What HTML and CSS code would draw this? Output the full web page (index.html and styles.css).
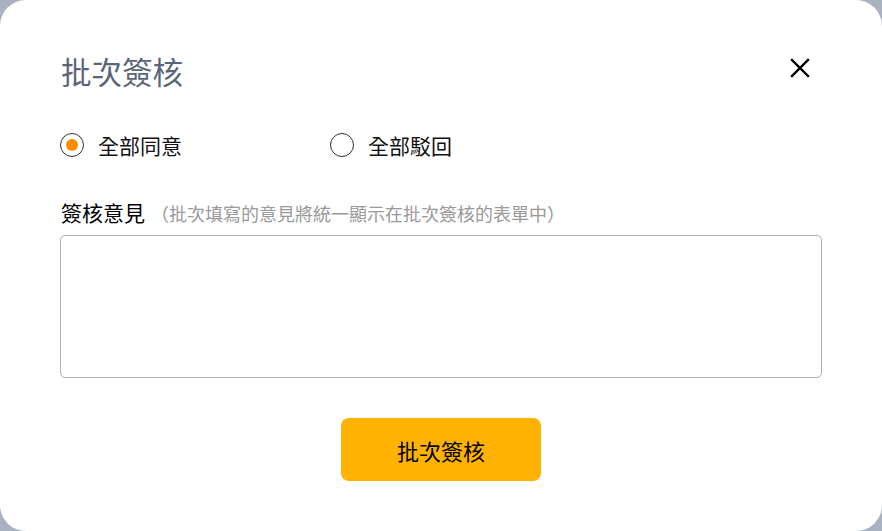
FILE: index.html
```html
<!DOCTYPE html>
<html lang="zh-Hant">
<head>
<meta charset="utf-8">
<title>批次簽核</title>
<link rel="stylesheet" href="styles.css">
</head>
<body>
<div class="dialog">
  <div class="header">
    <h1 class="title">批次簽核</h1>
    <button class="close" aria-label="關閉">
      <svg width="20" height="20" viewBox="0 0 20 20"><path d="M2 2 L18 18 M18 2 L2 18" stroke="#000" stroke-width="2.4" stroke-linecap="square" fill="none"/></svg>
    </button>
  </div>
  <div class="radios">
    <label class="radio"><span class="dot checked"></span><span class="rlabel">全部同意</span></label>
    <label class="radio"><span class="dot"></span><span class="rlabel">全部駁回</span></label>
  </div>
  <div class="field-label"><span class="main">簽核意見</span><span class="hint">（批次填寫的意見將統一顯示在批次簽核的表單中）</span></div>
  <div class="textarea"></div>
  <div class="actions"><button class="submit">批次簽核</button></div>
</div>
</body>
</html>
```

FILE: styles.css
```css
html, body {
  margin: 0;
  padding: 0;
  background: #aab1c1;
  font-family: "Noto Sans CJK TC", "Noto Sans", sans-serif;
}
.dialog {
  width: 882px;
  height: 531px;
  box-sizing: border-box;
  background: #fff;
  border-radius: 26px;
  padding: 51px 60px 0 60px;
  display: flex;
  flex-direction: column;
}
.header {
  display: flex;
  justify-content: space-between;
  align-items: flex-start;
}
.title {
  margin: 0 0 0 1px;
  font-size: 30.5px;
  line-height: 40px;
  font-weight: 400;
  color: #5b6478;
}
.close {
  border: 0;
  background: none;
  padding: 0;
  margin: 7px 12px 0 0;
  width: 20px;
  height: 20px;
  display: flex;
}
.radios {
  display: flex;
  margin-top: 39px;
  height: 30px;
}
.radio {
  width: 270px;
  display: flex;
  align-items: center;
  gap: 14px;
}
.dot {
  width: 24px;
  height: 24px;
  box-sizing: border-box;
  border: 1.5px solid #333;
  border-radius: 50%;
  display: flex;
  align-items: center;
  justify-content: center;
}
.dot.checked::after {
  content: "";
  width: 12px;
  height: 12px;
  border-radius: 50%;
  background: #ff8c00;
}
.rlabel {
  font-size: 21px;
  color: #111;
}
.field-label {
  margin-top: 38px;
  line-height: 28px;
  display: flex;
  align-items: baseline;
}
.main {
  font-size: 21px;
  font-weight: 400;
  color: #000;
  margin-left: 1px;
}
.hint {
  font-size: 18px;
  color: #999;
  margin-left: 6px;
}
.textarea {
  margin-top: 8px;
  height: 143px;
  box-sizing: border-box;
  border: 1px solid #b0b0b0;
  border-radius: 5px;
}
.actions {
  display: flex;
  justify-content: center;
  margin-top: 40px;
}
.submit {
  width: 200px;
  height: 63px;
  border: 0;
  border-radius: 8px;
  background: #ffb300;
  font-family: inherit;
  font-size: 22px;
  color: #000;
}
```
